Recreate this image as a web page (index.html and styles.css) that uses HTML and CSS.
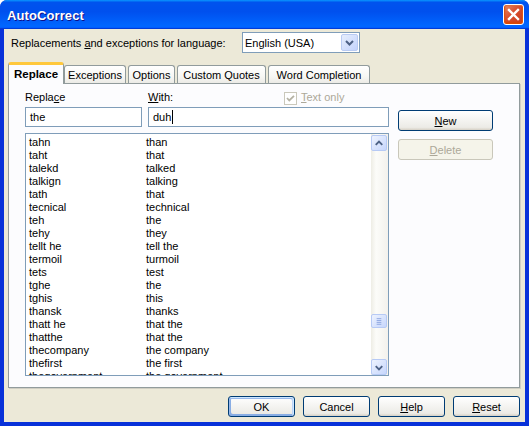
FILE: index.html
```html
<!DOCTYPE html>
<html>
<head>
    <link rel="stylesheet" href="styles.css">
</head>
<body>
    <div class="window">
        <div class="titlebar">
            <span class="title">AutoCorrect</span>
            <div class="close">
                <svg width="19" height="19" viewBox="0 0 19 19">
                    <path d="M5 5 L14 14 M14 5 L5 14" stroke="#fff" stroke-width="2.4" stroke-linecap="square"/>
                </svg>
            </div>
        </div>
        <div class="client">
            <div class="lang-row">
                <span class="lang-label">Replacements <u>a</u>nd exceptions for language:</span>
                <div class="select">
                    <span class="select-text">English (USA)</span>
                    <span class="drop-btn">
                        <svg width="15" height="17" viewBox="0 0 15 17">
                            <path d="M4 7 L7.5 10.5 L11 7" stroke="#4d6185" stroke-width="2" fill="none"/>
                        </svg>
                    </span>
                </div>
            </div>

            <div class="tabs">
                <div class="tab tab-active">Replace</div>
                <div class="tab tab-exceptions">Exceptions</div>
                <div class="tab tab-options">Options</div>
                <div class="tab tab-quotes">Custom Quotes</div>
                <div class="tab tab-completion">Word Completion</div>
            </div>

            <div class="panel">
                <div class="panel-main">
                    <div class="fields">
                        <div class="field field-replace">
                            <div class="field-label">Repla<u>c</u>e</div>
                            <div class="textbox">the</div>
                        </div>
                        <div class="field field-with">
                            <div class="with-head">
                                <span class="with-label"><u>W</u>ith:</span>
                                <span class="checkbox">
                                    <svg width="11" height="11" viewBox="0 0 11 11">
                                        <path d="M2 5 L4.3 7.5 L9 2.8" stroke="#b5b2a4" stroke-width="1.8" fill="none"/>
                                    </svg>
                                </span>
                                <span class="check-label"><u>T</u>ext only</span>
                            </div>
                            <div class="textbox">duh<span class="caret"></span></div>
                        </div>
                    </div>

                    <div class="listbox">
                        <div class="rows">
                            <div class="row"><span class="col-from">tahn</span><span>than</span></div>
                            <div class="row"><span class="col-from">taht</span><span>that</span></div>
                            <div class="row"><span class="col-from">talekd</span><span>talked</span></div>
                            <div class="row"><span class="col-from">talkign</span><span>talking</span></div>
                            <div class="row"><span class="col-from">tath</span><span>that</span></div>
                            <div class="row"><span class="col-from">tecnical</span><span>technical</span></div>
                            <div class="row"><span class="col-from">teh</span><span>the</span></div>
                            <div class="row"><span class="col-from">tehy</span><span>they</span></div>
                            <div class="row"><span class="col-from">tellt he</span><span>tell the</span></div>
                            <div class="row"><span class="col-from">termoil</span><span>turmoil</span></div>
                            <div class="row"><span class="col-from">tets</span><span>test</span></div>
                            <div class="row"><span class="col-from">tghe</span><span>the</span></div>
                            <div class="row"><span class="col-from">tghis</span><span>this</span></div>
                            <div class="row"><span class="col-from">thansk</span><span>thanks</span></div>
                            <div class="row"><span class="col-from">thatt he</span><span>that the</span></div>
                            <div class="row"><span class="col-from">thatthe</span><span>that the</span></div>
                            <div class="row"><span class="col-from">thecompany</span><span>the company</span></div>
                            <div class="row"><span class="col-from">thefirst</span><span>the first</span></div>
                            <div class="row"><span class="col-from">thegovernment</span><span>the government</span></div>
                        </div>
                        <div class="scrollbar">
                            <div class="scroll-btn">
                                <svg width="15" height="15" viewBox="0 0 15 15">
                                    <path d="M4 9 L7.5 5.5 L11 9" stroke="#4d6185" stroke-width="2" fill="none"/>
                                </svg>
                            </div>
                            <div class="track">
                                <div class="thumb">
                                    <svg width="15" height="14" viewBox="0 0 15 14">
                                        <path d="M5 4.5 H10 M5 6.5 H10 M5 8.5 H10 M5 10.5 H10" stroke="#8da6e0" stroke-width="1"/>
                                    </svg>
                                </div>
                            </div>
                            <div class="scroll-btn">
                                <svg width="15" height="15" viewBox="0 0 15 15">
                                    <path d="M4 6 L7.5 9.5 L11 6" stroke="#4d6185" stroke-width="2" fill="none"/>
                                </svg>
                            </div>
                        </div>
                    </div>
                </div>

                <div class="side-buttons">
                    <div class="button"><u>N</u>ew</div>
                    <div class="button button-disabled"><u>D</u>elete</div>
                </div>
            </div>

            <div class="footer">
                <div class="button button-default">OK</div>
                <div class="button">Cancel</div>
                <div class="button"><u>H</u>elp</div>
                <div class="button"><u>R</u>eset</div>
            </div>
        </div>
    </div>
</body>
</html>
```

FILE: styles.css
```css
* {
    box-sizing: border-box;
}

body {
    margin: 0;
    background: #fff;
    font-family: "Liberation Sans", Arial, sans-serif;
    font-size: 11px;
    color: #000;
}

u {
    text-decoration-thickness: 1px;
    text-underline-offset: 1px;
}

.window {
    width: 529px;
    height: 426px;
    display: flex;
    flex-direction: column;
    background: #0831d9;
    border-radius: 7px 7px 0 0;
    overflow: hidden;
}

.titlebar {
    height: 29px;
    flex: none;
    display: flex;
    align-items: center;
    justify-content: space-between;
    padding: 0 5px 0 7px;
    background: linear-gradient(180deg, #0997ff, #0053ee 8%, #0050ee 40%, #0066ff 88%, #0066ff 93%, #005bff 95%, #003dd7 96%, #003dd7);
}

.title {
    color: #fff;
    font-weight: bold;
    font-size: 13px;
    letter-spacing: 0.1px;
    padding-top: 2px;
    text-shadow: 1px 1px #0f1089;
}

.close {
    width: 21px;
    height: 21px;
    border: 1px solid #fff;
    border-radius: 3px;
    background: linear-gradient(135deg, #e88f6b, #d94f2f 45%, #c53a1b);
    box-shadow: inset 0 -1px 2px 1px #da4600, inset 0 0 0 1px #e27b55;
    display: flex;
    align-items: center;
    justify-content: center;
}

.client {
    flex: 1;
    margin: 0 4px 4px;
    background: #ece9d8;
    padding: 3px 5px 5px 4px;
    display: flex;
    flex-direction: column;
}

.lang-row {
    height: 21px;
    display: flex;
    align-items: center;
}

.lang-label {
    width: 234px;
    padding-left: 3px;
}

.select {
    width: 118px;
    height: 21px;
    border: 1px solid #7f9db9;
    background: #fff;
    display: flex;
    align-items: center;
    justify-content: space-between;
    padding: 1px;
}

.select-text {
    padding-left: 1px;
}

.drop-btn {
    width: 17px;
    height: 17px;
    border-radius: 2px;
    border: 1px solid #b9cbf3;
    background: linear-gradient(135deg, #e6eefc, #c3d3fd);
    display: flex;
    align-items: center;
    justify-content: center;
}

.tabs {
    height: 21px;
    margin-top: 9px;
    display: flex;
    align-items: flex-end;
    position: relative;
    z-index: 1;
}

.tab {
    height: 18px;
    border: 1px solid #919b9c;
    border-bottom: none;
    border-radius: 3px 3px 0 0;
    background: linear-gradient(180deg, #fff, #f7f7f4 60%, #ecebe6);
    display: flex;
    align-items: center;
    justify-content: center;
    margin-left: 2px;
}

.tab-active {
    height: 22px;
    width: 56px;
    margin-left: 0;
    margin-bottom: -1px;
    background: #fcfcfe;
    border-top: 3px solid #ffc83c;
    font-weight: bold;
    font-size: 11.5px;
    padding-bottom: 2px;
}

.tab-exceptions {
    width: 62px;
    margin-left: 0;
}

.tab-options {
    width: 47px;
}

.tab-quotes {
    width: 89px;
}

.tab-completion {
    width: 102px;
}

.panel {
    height: 305px;
    border: 1px solid #919b9c;
    background: #fcfcfe;
    box-shadow: 1px 1px 0 #d0cec3;
    display: flex;
    padding: 7px 0 0 16px;
}

.panel-main {
    width: 364px;
    display: flex;
    flex-direction: column;
}

.fields {
    display: flex;
}

.field-replace {
    width: 117px;
}

.field-with {
    width: 241px;
    margin-left: 6px;
}

.field-label,
.with-head {
    height: 13px;
    line-height: 13px;
    margin-bottom: 3px;
}

.with-head {
    display: flex;
    align-items: center;
}

.with-label {
    width: 136px;
}

.checkbox {
    width: 13px;
    height: 13px;
    border: 1px solid #cac8bb;
    background: #fff;
    display: flex;
    align-items: center;
    justify-content: center;
    margin-top: 1px;
}

.check-label {
    margin-left: 4px;
    color: #aca899;
}

.textbox {
    height: 20px;
    border: 1px solid #7f9db9;
    background: #fff;
    padding-left: 4px;
    display: flex;
    align-items: center;
}

.caret {
    width: 1px;
    height: 14px;
    background: #000;
    margin-left: 1px;
}

.listbox {
    height: 243px;
    margin-top: 6px;
    border: 1px solid #7f9db9;
    background: #fff;
    display: flex;
}

.rows {
    flex: 1;
    padding: 2px 0 0 3px;
    overflow: hidden;
}

.row {
    height: 13px;
    line-height: 13px;
    display: flex;
    white-space: nowrap;
}

.col-from {
    width: 117px;
}

.scrollbar {
    width: 17px;
    display: flex;
    flex-direction: column;
    background: linear-gradient(90deg, #eeede5, #fcfcf9 30%, #f3f1ec);
    padding: 1px 1px 0 0;
}

.scroll-btn,
.thumb {
    width: 16px;
    border: 1px solid #b7caf5;
    border-radius: 2px;
    background: linear-gradient(135deg, #eef3fe, #c6d6fc);
    display: flex;
    align-items: center;
    justify-content: center;
}

.scroll-btn {
    height: 16px;
}

.track {
    flex: 1;
}

.thumb {
    height: 14px;
    margin-top: 163px;
}

.side-buttons {
    margin: 19px 0 0 9px;
    width: 95px;
    display: flex;
    flex-direction: column;
    gap: 8px;
}

.button {
    height: 21px;
    border: 1px solid #003c74;
    border-radius: 3px;
    background: linear-gradient(180deg, #fff, #ecebe6 86%, #d6d0c5);
    display: flex;
    align-items: center;
    justify-content: center;
}

.button-disabled {
    border-color: #c9c7ba;
    background: #f5f4ea;
    color: #aca899;
}

.button-default {
    box-shadow: inset -1px 1px #cee7ff, inset 1px 2px #98b8ea, inset -2px 2px #bcd4f6, inset 1px -1px #89ade4, inset 2px -2px #89ade4;
}

.footer {
    margin-top: 8px;
    display: flex;
    justify-content: flex-end;
    gap: 8px;
}

.footer .button {
    width: 67px;
}
```
